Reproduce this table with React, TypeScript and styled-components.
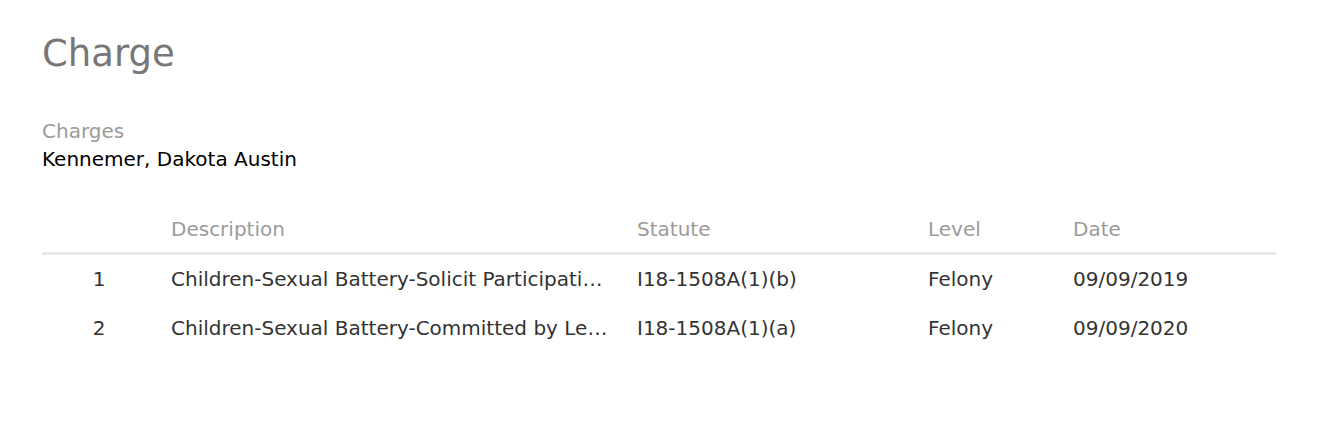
import React from "react";
import styled, { createGlobalStyle } from "styled-components";

type Charge = {
  no: number;
  description: string;
  statute: string;
  level: string;
  date: string;
};

// descriptions are shown cut short, as in the list view
const charges: Charge[] = [
  {
    no: 1,
    description: "Children-Sexual Battery-Solicit Participati…",
    statute: "I18-1508A(1)(b)",
    level: "Felony",
    date: "09/09/2019",
  },
  {
    no: 2,
    description: "Children-Sexual Battery-Committed by Le…",
    statute: "I18-1508A(1)(a)",
    level: "Felony",
    date: "09/09/2020",
  },
];

export default function App() {
  return (
    <>
      <GlobalStyle />
      <Page>
        <Title>Charge</Title>
        <Field>
          <FieldLabel>Charges</FieldLabel>
          <FieldValue>Kennemer, Dakota Austin</FieldValue>
        </Field>
        <Table>
          <HeaderRow>
            <HeadCell />
            <HeadCell>Description</HeadCell>
            <HeadCell>Statute</HeadCell>
            <HeadCell>Level</HeadCell>
            <HeadCell>Date</HeadCell>
          </HeaderRow>
          {charges.map((c) => (
            <Row key={c.no}>
              <Cell $center>{c.no}</Cell>
              <Cell $tight>{c.description}</Cell>
              <Cell>{c.statute}</Cell>
              <Cell>{c.level}</Cell>
              <Cell>{c.date}</Cell>
            </Row>
          ))}
        </Table>
      </Page>
    </>
  );
}

const GlobalStyle = createGlobalStyle`
  body {
    margin: 0;
    background: #fff;
    font-family: "DejaVu Sans", Verdana, sans-serif;
  }
`;

const Page = styled.div`
  padding: 32px 58px 0 42px;
  display: flex;
  flex-direction: column;
`;

const Title = styled.h1`
  margin: 0;
  font-size: 37px;
  line-height: 44px;
  font-weight: 400;
  color: #777;
`;

const Field = styled.div`
  margin-top: 41px;
  display: flex;
  flex-direction: column;
  font-size: 20px;
  line-height: 28px;
`;

const FieldLabel = styled.div`
  color: #9b9b9b;
`;

const FieldValue = styled.div`
  color: #000;
`;

const Table = styled.div`
  margin-top: 34px;
  width: 1234px;
  font-size: 20px;
`;

const Columns = styled.div`
  display: grid;
  grid-template-columns: 114px 466px 291px 145px 1fr;
`;

const HeaderRow = styled(Columns)`
  border-bottom: 3px solid #e9e9e9;
`;

const Row = styled(Columns)``;

const HeadCell = styled.div`
  padding: 0 15px;
  line-height: 45px;
  color: #9b9b9b;
`;

const Cell = styled.div<{ $center?: boolean; $tight?: boolean }>`
  padding: 0 ${(p) => (p.$tight ? "4px" : "15px")} 0 15px;
  line-height: 49px;
  color: #333;
  white-space: nowrap;
  overflow: hidden;
  text-overflow: ellipsis;
  text-align: ${(p) => (p.$center ? "center" : "left")};
`;
